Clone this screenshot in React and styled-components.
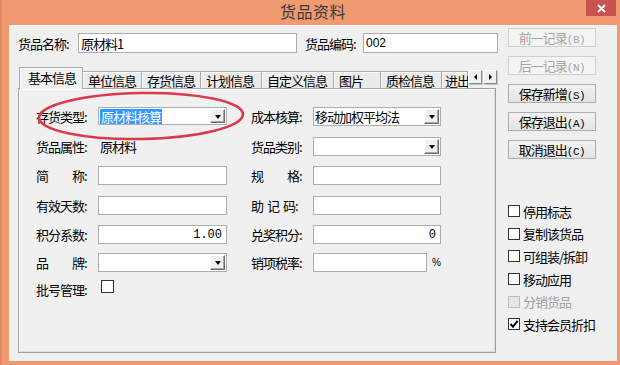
import React from 'react';
import styled, { createGlobalStyle } from 'styled-components';

const FONT = `"Noto Sans CJK SC", "Noto Sans", "Liberation Sans", sans-serif`;

const Global = createGlobalStyle`
  html, body { margin: 0; padding: 0; }
  body {
    font-family: ${FONT};
    font-size: 13px;
    color: #000;
    background: #ef9a70;
  }
  * { box-sizing: border-box; }
`;

const Window = styled.div`
  width: 620px;
  height: 365px;
  background: #ef9a70;
  display: flex;
  flex-direction: column;
  box-shadow: inset 2px 0 0 #e4895f;
`;

const TitleBar = styled.div`
  height: 25px;
  display: grid;
  grid-template-columns: 1fr auto 1fr;
  align-items: start;
`;

const Title = styled.div`
  grid-column: 2;
  font-size: 16px;
  line-height: 22px;
  color: #3a3a3a;
  padding-left: 6px;
  letter-spacing: 0.5px;
`;

const CloseButton = styled.div`
  grid-column: 3;
  justify-self: end;
  width: 30px;
  height: 16px;
  margin-right: 4px;
  background: #c9544f;
  display: flex;
  align-items: center;
  justify-content: center;
`;

const Client = styled.div`
  flex: 1;
  margin: 0 3px 4px 9px;
  background: #f0f0f0;
  border-top: 1px solid #fafafa;
  display: flex;
  letter-spacing: -1px;
`;

const Main = styled.div`
  width: 491px;
  padding: 7px 0 0 9px;
  display: flex;
  flex-direction: column;
`;

const HeaderRow = styled.div`
  display: flex;
  align-items: center;
  height: 20px;
`;

const Label = styled.div`
  width: ${(p) => p.$w || 62}px;
  margin-left: ${(p) => p.$ml || 0}px;
  white-space: nowrap;
  line-height: 19px;
`;

const Space = styled.span`
  display: inline-block;
  width: ${(p) => p.$w}px;
`;

const Field = styled.div`
  width: ${(p) => p.$w}px;
  height: ${(p) => p.$h || 19}px;
  background: #fff;
  border: 1px solid #abadb3;
  display: flex;
  align-items: center;
  justify-content: ${(p) => (p.$right ? 'flex-end' : 'flex-start')};
  padding: 0 4px 0 2px;
  white-space: nowrap;
  overflow: hidden;
`;

const Value = styled.span`
  font-family: ${(p) => (p.$mono ? '"Liberation Mono", monospace' : p.$latin ? '"Liberation Sans", sans-serif' : 'inherit')};
  letter-spacing: ${(p) => (p.$mono || p.$latin ? '0px' : 'inherit')};
  font-size: ${(p) => (p.$mono || p.$latin ? '12px' : '13px')};
`;

const TabBar = styled.div`
  display: flex;
  align-items: flex-end;
  height: 22px;
  margin-top: 14px;
  margin-left: 1px;
  position: relative;
  z-index: 2;
`;

const TabList = styled.div`
  display: flex;
  align-items: flex-end;
  width: 449px;
  height: 22px;
  overflow: hidden;
`;

const Tab = styled.div`
  flex: none;
  width: ${(p) => p.$w}px;
  height: ${(p) => (p.$active ? 23 : 18)}px;
  margin-bottom: ${(p) => (p.$active ? -1 : 0)}px;
  margin-right: -1px;
  padding-left: ${(p) => (p.$active ? 8 : p.$pl ?? 5)}px;
  padding-top: ${(p) => (p.$active ? 1 : 0)}px;
  line-height: 17px;
  background: ${(p) => (p.$active ? '#f0f0f0' : '#ebebeb')};
  border: 1px solid #a9a9a9;
  border-bottom: ${(p) => (p.$active ? 'none' : '1px solid #a9a9a9')};
  box-shadow: inset 1px 1px 0 #fbfbfb;
  white-space: nowrap;
  position: relative;
  z-index: ${(p) => (p.$active ? 2 : 1)};
`;

const Arrows = styled.div`
  display: flex;
  gap: 1px;
  align-self: flex-start;
  margin-top: 3px;
`;

const ArrowBtn = styled.div`
  width: 14px;
  height: 14px;
  background: #f0f0f0;
  border: 1px solid;
  border-color: #fff #8a8a8a #8a8a8a #fff;
  box-shadow: 1px 1px 0 #c8c8c8;
  display: flex;
  align-items: center;
  justify-content: center;
`;

const ArrowHead = styled.div`
  width: 0;
  height: 0;
  border-top: 3px solid transparent;
  border-bottom: 3px solid transparent;
  ${(p) => (p.$dir === 'left' ? 'border-right: 3px solid #000;' : 'border-left: 3px solid #000;')}
`;

const Panel = styled.div`
  position: relative;
  width: 478px;
  height: 265px;
  margin-top: -1px;
  border: 1px solid #a0a0a0;
  box-shadow: inset 1px 1px 0 #fdfdfd, inset -1px -1px 0 #dcdcdc;
  background: #f0f0f0;
  padding: 18px 0 0 17px;
`;

const Form = styled.div`
  display: grid;
  grid-template-columns: 62px 129px 24px 62px 128px;
  grid-template-rows: 30px 29px 30px 29px 28px 27px 19px;
  align-items: start;
`;

const Gap = styled.div``;

const Plain = styled.div`
  line-height: 19px;
  padding-left: 2px;
`;

const Combo = styled.div`
  width: ${(p) => p.$w}px;
  height: ${(p) => p.$h || 19}px;
  background: #fff;
  border: 1px solid #abadb3;
  display: flex;
  align-items: center;
  padding-left: 1px;
`;

const ComboText = styled.div`
  flex: 1;
  white-space: nowrap;
  overflow: hidden;
`;

const Highlight = styled.span`
  background: #3399ff;
  color: #fff;
  padding: 0 1px 0 1px;
  line-height: 15px;
  display: inline-block;
`;

const DropBtn = styled.div`
  width: 15px;
  height: ${(p) => (p.$h ? p.$h - 4 : 15)}px;
  margin-right: 1px;
  background: #f0f0f0;
  border: 1px solid;
  border-color: #fff #6b6b6b #6b6b6b #fff;
  box-shadow: inset -1px -1px 0 #a8a8a8;
  display: flex;
  align-items: center;
  justify-content: center;
`;

const Tri = styled.div`
  width: 0;
  height: 0;
  border-left: 3.5px solid transparent;
  border-right: 3.5px solid transparent;
  border-top: 4px solid #000;
  margin-top: 1px;
`;

const Inline = styled.div`
  display: flex;
  align-items: center;
  gap: 5px;
`;

const Percent = styled.span`
  font-size: 10px;
  letter-spacing: 0;
  font-family: "Liberation Sans", sans-serif;
`;

const Box = styled.div`
  width: ${(p) => p.$size}px;
  height: ${(p) => p.$size}px;
  margin-left: ${(p) => p.$ml || 0}px;
  flex: none;
  border: 1px solid ${(p) => (p.$disabled ? '#bdbdbd' : '#333')};
  background: ${(p) => (p.$disabled ? '#e6e6e6' : '#fff')};
  display: flex;
  align-items: center;
  justify-content: center;
`;

const Side = styled.div`
  width: 88px;
  margin-left: 8px;
  padding-top: 2px;
  display: flex;
  flex-direction: column;
`;

const Buttons = styled.div`
  display: flex;
  flex-direction: column;
  gap: 9px;
`;

const Button = styled.div`
  height: 19px;
  border: 1px solid ${(p) => (p.$disabled ? '#cfcfcf' : '#acacac')};
  background: ${(p) => (p.$disabled ? '#f4f4f4' : 'linear-gradient(#f2f2f2, #e4e4e4)')};
  color: ${(p) => (p.$disabled ? '#a3a3a3' : '#000')};
  text-align: center;
  line-height: 17px;
  white-space: nowrap;
`;

const Key = styled.span`
  font-family: "Liberation Mono", monospace;
  font-size: 11px;
  letter-spacing: -0.5px;
`;

const CheckList = styled.div`
  margin-top: 41px;
  display: flex;
  flex-direction: column;
`;

const CheckRow = styled.div`
  height: 22.6px;
  display: flex;
  align-items: center;
  gap: 3px;
  color: ${(p) => (p.$disabled ? '#a0a0a0' : '#000')};
  white-space: nowrap;
`;

const Annotation = styled.svg`
  position: absolute;
  left: 17px;
  top: 0;
  pointer-events: none;
`;

const CheckMark = () => (
  <svg width="10" height="10" viewBox="0 0 10 10">
    <path d="M1.5 5 L4 7.8 L8.6 1.8" fill="none" stroke="#000" strokeWidth="2" />
  </svg>
);

const Drop = ({ h }) => (
  <DropBtn $h={h}>
    <Tri />
  </DropBtn>
);

const tabs = [
  { t: '基本信息', w: 64, active: true },
  { t: '单位信息', w: 60 },
  { t: '存货信息', w: 60 },
  { t: '计划信息', w: 62 },
  { t: '自定义信息', w: 73 },
  { t: '图片', w: 48 },
  { t: '质检信息', w: 62 },
  { t: '进出', w: 27, pl: 3 },
];

const checks = [
  { t: '停用标志' },
  { t: '复制该货品' },
  { t: '可组装/拆卸' },
  { t: '移动应用' },
  { t: '分销货品', disabled: true },
  { t: '支持会员折扣', checked: true },
];

const buttons = [
  { t: '前一记录', k: 'B', disabled: true },
  { t: '后一记录', k: 'N', disabled: true },
  { t: '保存新增', k: 'S' },
  { t: '保存退出', k: 'A' },
  { t: '取消退出', k: 'C' },
];

export default function App() {
  return (
    <>
      <Global />
      <Window>
        <TitleBar>
          <Title>货品资料</Title>
          <CloseButton>
            <svg width="9" height="9" viewBox="0 0 9 9">
              <path d="M1 1 L8 8 M8 1 L1 8" stroke="#fff" strokeWidth="1.8" />
            </svg>
          </CloseButton>
        </TitleBar>
        <Client>
          <Main>
            <HeaderRow>
              <Label $w={60}>货品名称:</Label>
              <Field $w={219} $h={20}>
                <Value>原材料1</Value>
              </Field>
              <Label $w={58} $ml={8}>货品编码:</Label>
              <Field $w={135} $h={20}>
                <Value $latin>002</Value>
              </Field>
            </HeaderRow>
            <TabBar>
              <TabList>
                {tabs.map((tab) => (
                  <Tab key={tab.t} $w={tab.w} $pl={tab.pl} $active={tab.active}>
                    {tab.t}
                  </Tab>
                ))}
              </TabList>
              <Arrows>
                <ArrowBtn>
                  <ArrowHead $dir="left" />
                </ArrowBtn>
                <ArrowBtn>
                  <ArrowHead $dir="right" />
                </ArrowBtn>
              </Arrows>
            </TabBar>
            <Panel>
              <Form>
                <Label>存货类型:</Label>
                <Combo $w={129} $h={18}>
                  <ComboText>
                    <Highlight>原材料核算</Highlight>
                  </ComboText>
                  <Drop h={18} />
                </Combo>
                <Gap />
                <Label>成本核算:</Label>
                <Combo $w={128}>
                  <ComboText>移动加权平均法</ComboText>
                  <Drop />
                </Combo>

                <Label>货品属性:</Label>
                <Plain>原材料</Plain>
                <Gap />
                <Label>货品类别:</Label>
                <Combo $w={128}>
                  <ComboText />
                  <Drop />
                </Combo>

                <Label>
                  简<Space $w={24} />称:
                </Label>
                <Field $w={129} />
                <Gap />
                <Label>
                  规<Space $w={24} />格:
                </Label>
                <Field $w={128} />

                <Label>有效天数:</Label>
                <Field $w={129} />
                <Gap />
                <Label>
                  助<Space $w={4} />记<Space $w={4} />码:
                </Label>
                <Field $w={128} />

                <Label>积分系数:</Label>
                <Field $w={129} $right>
                  <Value $mono>1.00</Value>
                </Field>
                <Gap />
                <Label>兑奖积分:</Label>
                <Field $w={128} $right>
                  <Value $mono>0</Value>
                </Field>

                <Label>
                  品<Space $w={24} />牌:
                </Label>
                <Combo $w={129}>
                  <ComboText />
                  <Drop />
                </Combo>
                <Gap />
                <Label>销项税率:</Label>
                <Inline>
                  <Field $w={119} />
                  <Percent>%</Percent>
                </Inline>

                <Label>批号管理:</Label>
                <Box $size={13} $ml={3} />
              </Form>
              <Annotation width="210" height="52" viewBox="0 0 210 52">
                <ellipse
                  cx="105"
                  cy="27"
                  rx="102"
                  ry="23"
                  fill="none"
                  stroke="#d83a4e"
                  strokeWidth="2.6"
                  transform="rotate(-1 105 27)"
                />
              </Annotation>
            </Panel>
          </Main>
          <Side>
            <Buttons>
              {buttons.map((b) => (
                <Button key={b.k} $disabled={b.disabled}>
                  {b.t}
                  <Key>({b.k})</Key>
                </Button>
              ))}
            </Buttons>
            <CheckList>
              {checks.map((c) => (
                <CheckRow key={c.t} $disabled={c.disabled}>
                  <Box $size={12} $disabled={c.disabled}>
                    {c.checked && <CheckMark />}
                  </Box>
                  {c.t}
                </CheckRow>
              ))}
            </CheckList>
          </Side>
        </Client>
      </Window>
    </>
  );
}
